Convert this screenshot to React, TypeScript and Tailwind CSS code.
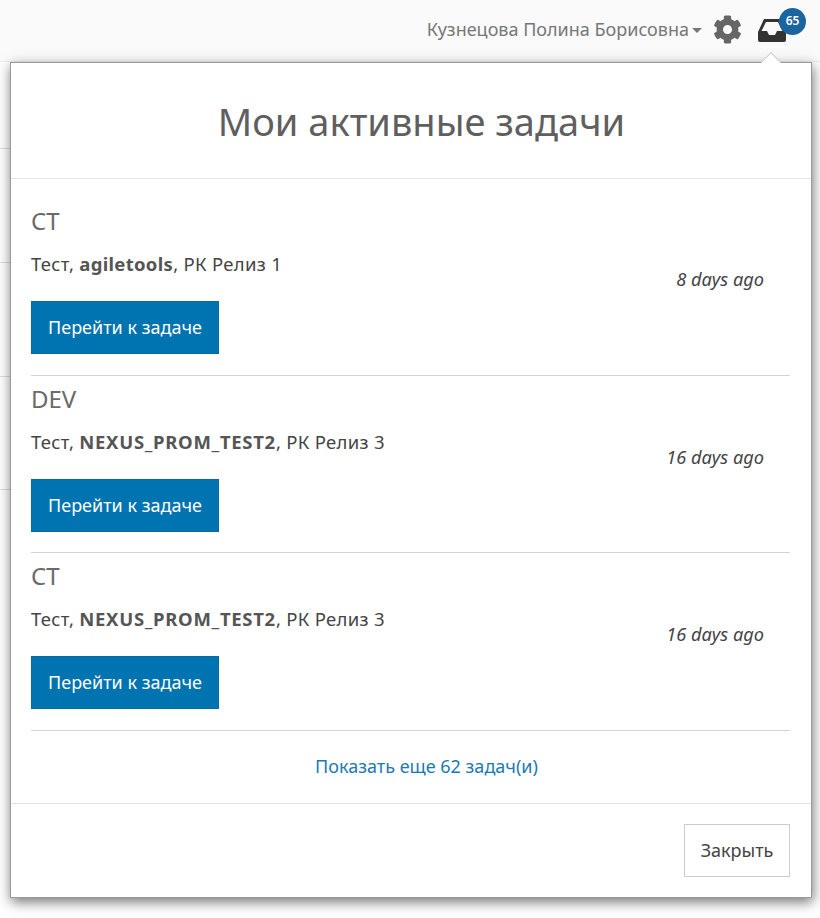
import { FaCog } from "react-icons/fa";

const tasks = [
  { stage: "CT", name: "agiletools", nameClass: "", release: "РК Релиз 1", age: "8 days ago" },
  { stage: "DEV", name: "NEXUS_PROM_TEST2", nameClass: "tracking-[0.7px]", release: "РК Релиз 3", age: "16 days ago" },
  { stage: "CT", name: "NEXUS_PROM_TEST2", nameClass: "tracking-[0.7px]", release: "РК Релиз 3", age: "16 days ago" },
];

function TaskRow({ stage, name, nameClass, release, age }: (typeof tasks)[number]) {
  return (
    <div className="flex h-[177.5px] items-start justify-between border-b border-[#d4d4d4] pt-[7px]">
      <div>
        <div className="h-[31px] text-[24px] leading-[31px] text-[#6a6a6a]">{stage}</div>
        <div className="mt-[16px] h-[24px] text-[18.5px] leading-[24px] tracking-[0.3px] text-[#444]">
          Тест, <b className={`font-bold text-[#555] ${nameClass}`}>{name}</b>, {release}
        </div>
        <a className="mt-[25px] flex h-[53px] w-[188px] items-center justify-center border border-[#0a6aa0] bg-[#0073b1] text-[18px] text-white">
          Перейти к задаче
        </a>
      </div>
      <div className="mr-[26px] mt-[62px] text-[18.2px] italic leading-[24px] text-[#444]">{age}</div>
    </div>
  );
}

export default function App() {
  return (
    <div className="relative h-[918px] w-[820px] overflow-hidden bg-white font-['Noto_Sans','Liberation_Sans',sans-serif]">
      <header className="flex h-[62px] items-center justify-end border-b border-[#eee] bg-[#fafafa] pb-[2px] pr-[14px]">
        <span className="text-[18px] text-[#777]">Кузнецова Полина Борисовна</span>
        <span className="ml-[3px] mt-[2px] border-x-[5px] border-t-[5px] border-x-transparent border-t-[#777]" />
        <FaCog className="ml-[11px] h-[29px] w-[29px] text-[#666]" />
        <div className="relative ml-[16px] flex h-[30px] w-[48px] items-center">
          <svg viewBox="0 0 28 23" className="mt-[2px] h-[23px] w-[28px]">
            <path
              fill="#333"
              fillRule="evenodd"
              d="M6 0H22L28 13V21a2 2 0 0 1-2 2H2a2 2 0 0 1-2-2V13ZM8 3 3.500 12H9L11 16H17L19 12H24.500L20 3Z"
            />
          </svg>
          <span className="absolute right-0 top-[-7px] flex h-[27px] w-[27px] items-center justify-center rounded-full bg-[#1a64a0] text-[12px] font-semibold text-white">65</span>
        </div>
      </header>

      {/* page rows showing behind the dialog, only the left edge is visible */}
      <div className="flex w-[11px] flex-col">
        <div className="h-[87px] border-b border-[#ddd]" />
        <div className="h-[114px] border-b border-[#ddd]" />
        <div className="h-[114px] border-b border-[#ddd]" />
        <div className="h-[113px] border-b border-[#ddd]" />
      </div>

      <div className="absolute left-[10px] top-[62px] flex h-[836px] w-[802px] flex-col border border-[#999] bg-white shadow-[1px_4px_12px_rgba(0,0,0,0.55)]">
        <span className="absolute right-[33px] top-[-8px] h-[14px] w-[14px] rotate-45 border-l border-t border-[#ccc] bg-white" />
        <h1 className="relative flex h-[116px] items-center justify-center border-b border-[#e5e5e5] pl-[21px] pt-[2px] text-[38px] font-normal text-[#5f5f5f]">
          Мои активные задачи
        </h1>
        <div className="flex-1 pl-[20px] pr-[21px] pt-[19px]">
          {tasks.map((t, i) => (
            <TaskRow key={i} {...t} />
          ))}
          <a className="mt-[23px] block pl-[32px] text-center text-[18px] leading-[24px] text-[#1a7ab5]">Показать еще 62 задач(и)</a>
        </div>
        <div className="flex h-[94px] items-center justify-end border-t border-[#e5e5e5] pr-[21px]">
          <button className="h-[53px] w-[106px] border border-[#ccc] bg-white text-[18px] text-[#444]">Закрыть</button>
        </div>
      </div>
    </div>
  );
}
